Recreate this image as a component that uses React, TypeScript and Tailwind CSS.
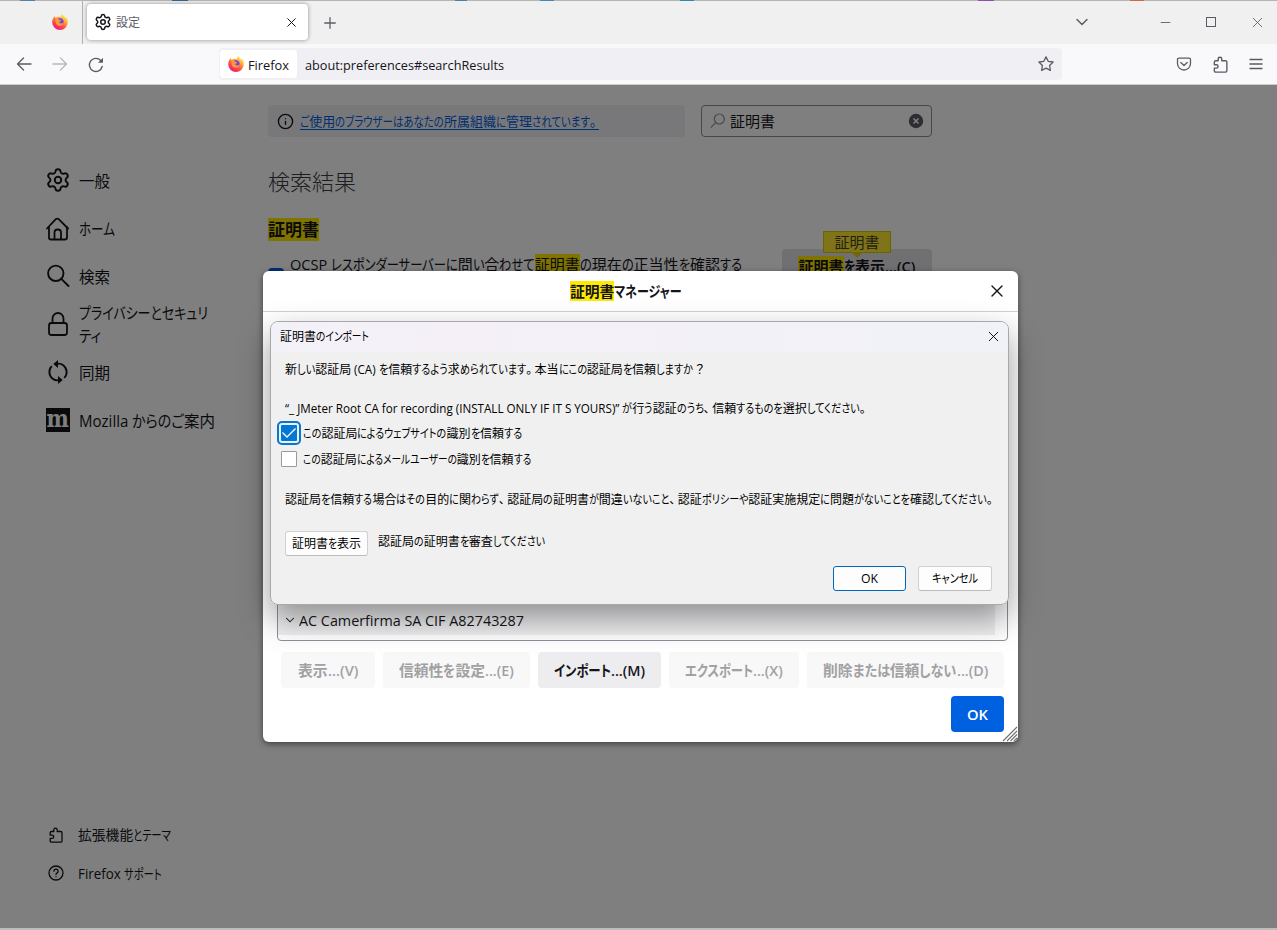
import React, { useLayoutEffect, useRef } from 'react';
import { Settings, X, Plus, ChevronDown, Minus, Menu, Info } from 'lucide-react';

const LATIN_SCALE = 0.97;

// Kanji keep their full advance, latin is slightly condensed and kana runs fill what is left of the width
const Label = ({ text, width, className = '' }: { text: string; width?: number; className?: string }) => {
  const ref = useRef<HTMLSpanElement>(null);

  useLayoutEffect(() => {
    if (!ref.current || !width) return;
    const runs = Array.from(ref.current.querySelectorAll<HTMLElement>('[data-run]'));
    runs.forEach((run) => {
      run.style.transform = '';
      run.style.marginRight = '';
    });
    const widths = runs.map((run) => run.getBoundingClientRect().width);
    const sumOf = (kind: string) => runs.reduce((sum, run, i) => sum + (run.dataset.run === kind ? widths[i] : 0), 0);
    const kana = sumOf('kana');
    const latin = sumOf('latin');
    const fixed = ref.current.getBoundingClientRect().width - kana - latin;
    const latinScale = kana ? LATIN_SCALE : (width - fixed) / latin;
    const kanaScale = (width - fixed - latin * latinScale) / kana;
    runs.forEach((run, i) => {
      const scale = run.dataset.run === 'kana' ? kanaScale : latinScale;
      run.style.transform = `scaleX(${scale})`;
      run.style.marginRight = `${widths[i] * (scale - 1)}px`;
    });
  }, [text, width]);

  return (
    <span ref={ref} className={`inline-block shrink-0 whitespace-pre ${className}`}>
      {text.split(/(\[[^\]]+\]|[、。]|？|[\u3041-\u30ff]+|[\u0020-\u005a\u005c\u005e-\u007e“”]+)/).map((part, i) => {
        if (!part) return null;
        if (part[0] === '[') {
          return <mark key={i} className="bg-[#ffe900] text-inherit">{part.slice(1, -1)}</mark>;
        }
        if (/[、。]/.test(part)) return <span key={i} className="pr-[0.2em]">{part}</span>;
        if (part === '？') return <span key={i} className="pl-[0.2em]">{part}</span>;
        if (/[\u4e00-\u9fff]/.test(part)) return <span key={i}>{part}</span>;
        const kind = /[\u3041-\u30ff]/.test(part) ? 'kana' : 'latin';
        return <span key={i} data-run={kind} className="inline-block origin-left whitespace-pre">{part}</span>;
      })}
    </span>
  );
};

const FirefoxLogo = () => (
  <svg viewBox="0 0 16 16" className="h-4 w-4 shrink-0">
    <defs>
      <linearGradient id="fx-body" x1="0.8" y1="0.05" x2="0.25" y2="1">
        <stop offset="0" stopColor="#fff44f" />
        <stop offset="0.35" stopColor="#ffa436" />
        <stop offset="0.65" stopColor="#ff4a45" />
        <stop offset="1" stopColor="#e31587" />
      </linearGradient>
    </defs>
    <path d="M10.3 0c-1 1.100-1.300 2-1.100 3.100C6.800 2.500 5 3 4 4 3.200 3.600 2.900 3 2.900 2 1.200 3.300.2 5.800.2 8.200a7.800 7.800 0 0 0 15.600 0c0-2.600-1-4.600-2.300-5.600.1.600.1 1-.1 1.500C12.700 2.200 10.900 1.600 10.300 0z" fill="url(#fx-body)" />
    <circle cx="8" cy="7.800" r="3.600" fill="#7542e5" />
    <path d="M3.600 5.200c1.500-.8 3.100-.2 3.900.7 1 .1 1.900.3 1.700.9-.5.800-1.700.8-1.900 1.300.3 1.800 2.500 2 4.200.5-.4 2.200-1.900 3.300-3.800 3.200C4.800 11.600 3 9 3.600 5.200z" fill="#ff9a30" />
  </svg>
);

const PuzzleIcon = ({ className = '' }: { className?: string }) => (
  <svg viewBox="0 0 16 16" fill="none" stroke="currentColor" strokeWidth="1.3" strokeLinejoin="round" className={className}>
    <path d="M2.200 5.800c0-.8.500-1.300 1.300-1.300h2.300V2.900a1.700 1.700 0 0 1 3.400 0v1.600h3.500c.8 0 1.300.5 1.300 1.300v8.100c0 .8-.5 1.300-1.300 1.300H3.500c-.8 0-1.300-.5-1.300-1.300v-2.500h1.900a1.600 1.600 0 0 0 0-3.200H2.200z" />
  </svg>
);

const HomeIcon = () => (
  <svg viewBox="0 0 24 24" fill="none" stroke="currentColor" strokeWidth="1.800" strokeLinejoin="round" strokeLinecap="round" className="mt-px h-6 w-6">
    <path d="M1 11.500 9.800 2.200a2 2 0 0 1 2.900 0L22 11.500M3 10v10.500a2 2 0 0 0 2 2h14a2 2 0 0 0 2-2V10M8.500 22v-6.500a3 3 0 0 1 3-3h.5a3 3 0 0 1 3 3V22" />
  </svg>
);

const SearchIcon = () => (
  <svg viewBox="0 0 24 24" fill="none" stroke="currentColor" strokeWidth="1.900" strokeLinecap="round" className="h-6 w-6">
    <circle cx="9.800" cy="9.300" r="7.700" />
    <path d="m15.300 14.800 7.200 7.200" />
  </svg>
);

const LockIcon = () => (
  <svg viewBox="0 0 24 24" fill="none" stroke="currentColor" strokeWidth="1.800" className="h-6 w-6">
    <rect x="3" y="11" width="18" height="12" rx="2.500" />
    <path d="M6.500 11V6.500a5.500 5.500 0 0 1 11 0V11" />
  </svg>
);

const SyncIcon = () => (
  <svg viewBox="0 0 24 24" fill="none" stroke="currentColor" strokeWidth="1.900" className="h-6 w-6">
    <path d="M6.800 18.800a8.400 8.400 0 0 1-1-12.700M17.200 5.200a8.400 8.400 0 0 1 1 12.700M11 3.700c2.400-.3 4.500.1 6.300 1.600M13 20.300c-2.400.3-4.500-.1-6.300-1.600" />
    <path d="M12 0v8L7.300 4zM12 24v-8l4.700 4z" fill="currentColor" stroke="none" />
  </svg>
);

const MozillaIcon = () => (
  <span className="flex h-6 w-6 shrink-0 items-center justify-center bg-[#15141a] font-['DejaVu_Serif',serif] text-[24px] font-bold leading-6 text-white">
    <span className="-mt-[3px] inline-block scale-x-[0.88]">m</span>
  </span>
);

const navItems = [
  { icon: <Settings size={26} strokeWidth={1.8} className="shrink-0" />, lines: ['一般'], widths: [32] },
  { icon: <HomeIcon />, lines: ['ホーム'], widths: [36] },
  { icon: <SearchIcon />, lines: ['検索'], widths: [32] },
  { icon: <LockIcon />, lines: ['プライバシーとセキュリ', 'ティ'], widths: [129, 22] },
  { icon: <SyncIcon />, lines: ['同期'], widths: [32] },
  { icon: <MozillaIcon />, lines: ['Mozilla からのご案内'], widths: [136] },
];

const managerButtons = [
  { text: '表示...(V)', width: 60, box: 'w-[94px]' },
  { text: '信頼性を設定...(E)', width: 115, box: 'w-[147px]' },
  { text: 'インポート...(M)', width: 91, box: 'w-[123px]', active: true },
  { text: 'エクスポート...(X)', width: 98, box: 'w-[130px]' },
  { text: '削除または信頼しない...(D)', width: 165, box: 'w-[197px]' },
];

const BrowserChrome = () => (
  <header>
    <div className="h-px bg-[linear-gradient(90deg,#b5b5b5_0_20px,#4f82ad_20px_35px,#b5b5b5_35px_172px,#35648c_172px_188px,#b5b5b5_188px_455px,#4780a8_455px_467px,#b5b5b5_467px_540px,#418cae_540px_554px,#b5b5b5_554px_680px,#2c8fa0_680px_694px,#b5b5b5_694px_978px,#8e4cb8_978px_994px,#b5b5b5_994px_1130px,#cf6a3f_1130px_1144px,#b5b5b5_1144px)]" />
    {/* Tab strip */}
    <div className="flex h-[43px] items-center bg-[#f0f0f0] pb-px text-[#5b5b66]">
      <div className="flex h-[43px] w-[83px] items-center border-r border-[#b0b0b4] pl-[52px]">
        <FirefoxLogo />
      </div>
      <div className="ml-1 flex h-[36px] w-[221px] items-center rounded bg-white pl-[7px] pr-[9px] shadow-[0_0_4px_rgba(0,0,0,0.4)]">
        <Settings size={18} strokeWidth={2} className="text-[#15141a]" />
        <Label text="設定" className="ml-[4px] mt-px text-[12px]" />
        <X size={15} strokeWidth={1.6} className="ml-auto text-[#15141a]" />
      </div>
      <Plus size={18} strokeWidth={1.7} className="ml-[13px] mt-px" />
      <div className="ml-auto flex items-center">
        <ChevronDown size={20} strokeWidth={1.7} className="mr-[66px]" />
        <Minus size={15} strokeWidth={1.4} className="mr-[33px]" />
        <span className="mr-[33px] h-[10px] w-[10px] border border-[#5b5b66]" />
        <X size={17} strokeWidth={1.2} className="mr-[11px]" />
      </div>
    </div>
    {/* Navigation bar */}
    <div className="flex h-[41px] items-center border-b border-[#ccccce] bg-[#f9f9fb] text-[#5b5b66]">
      <svg viewBox="0 0 16 16" fill="none" stroke="currentColor" strokeWidth="1.300" strokeLinecap="round" strokeLinejoin="round" className="ml-4 h-4 w-4">
        <path d="M15 8H1.500M7.500 2 1.500 8l6 6" />
      </svg>
      <svg viewBox="0 0 16 16" fill="none" stroke="currentColor" strokeWidth="1.300" strokeLinecap="round" strokeLinejoin="round" className="ml-5 h-4 w-4 opacity-40">
        <path d="M1 8h13.500M8.500 2l6 6-6 6" />
      </svg>
      <svg viewBox="0 0 16 16" fill="none" stroke="currentColor" strokeWidth="1.400" strokeLinecap="round" className="ml-5 mt-px h-4 w-4">
        <path d="M14.200 9.500a6.500 6.500 0 1 1-1.700-6.200l1 1" />
        <path d="M15 .800v5h-5z" fill="currentColor" stroke="none" />
      </svg>
      <div className="ml-[115px] flex h-8 w-[843px] items-center rounded bg-[#f0f0f4] text-[13.500px] text-[#15141a]">
        <div className="ml-px flex h-7 w-[77px] items-center gap-1 rounded-[3px] bg-white pl-2">
          <FirefoxLogo />
          <Label text="Firefox" width={41} className="mt-[2px]" />
        </div>
        <Label text="about:preferences#searchResults" width={199} className="ml-2 mt-[2px]" />
        <svg viewBox="0 0 16 16" fill="none" stroke="#5b5b66" strokeWidth="1.300" strokeLinejoin="round" className="ml-auto mr-2 h-4 w-4">
          <path d="m8 .900 2.200 4.400 4.900.700-3.500 3.500.800 4.900L8 12.200l-4.400 2.200.800-4.900L.900 6l4.900-.700z" />
        </svg>
      </div>
      <svg viewBox="0 0 16 16" fill="none" stroke="currentColor" strokeWidth="1.300" strokeLinecap="round" strokeLinejoin="round" className="ml-auto mr-5 h-4 w-4">
        <path d="M2.800 2.200h10.400c.8 0 1.300.5 1.300 1.300v4a6.500 6.500 0 0 1-13 0v-4c0-.8.500-1.300 1.300-1.300zM4.800 6.500 8 9.500l3.200-3" />
      </svg>
      <PuzzleIcon className="mr-[19px] h-[17px] w-[17px]" />
      <svg viewBox="0 0 16 16" stroke="currentColor" strokeWidth="1.300" className="mr-[13px] h-4 w-4">
        <path d="M1.500 3.500h13M1.500 8h13M1.500 12.500h13" />
      </svg>
    </div>
  </header>
);

const Sidebar = () => (
  <aside className="flex w-[268px] shrink-0 flex-col justify-between pb-[36px] pt-[71px]">
    <nav>
      {navItems.map((item) => (
        <div key={item.lines[0]} className="flex h-12 items-center gap-[9px] pl-[46px] text-[15.500px] leading-[23px]">
          <span className="flex w-6 shrink-0 justify-center">{item.icon}</span>
          <div className="mt-[2px] flex flex-col items-start">
            {item.lines.map((line, i) => (
              <Label key={line} text={line} width={item.widths[i]} />
            ))}
          </div>
        </div>
      ))}
    </nav>
    <div className="pl-[48px] text-[13.800px]">
      <div className="flex h-[38px] items-center gap-[14px]">
        <PuzzleIcon className="h-4 w-4" />
        <Label text="拡張機能とテーマ" width={93} className="mt-px" />
      </div>
      <div className="flex h-[38px] items-center gap-[14px]">
        <svg viewBox="0 0 16 16" fill="none" stroke="currentColor" strokeWidth="1.300" strokeLinecap="round" className="h-4 w-4">
          <circle cx="8" cy="8" r="7" />
          <path d="M5.900 6.200a2.100 2.100 0 1 1 3.300 1.700c-.8.500-1.200.8-1.200 1.500M8 11.600v.1" />
        </svg>
        <Label text="Firefox サポート" width={84} className="mt-[2px]" />
      </div>
    </div>
  </aside>
);

const SearchResults = () => (
  <main className="w-[664px] pt-5">
    <div className="flex gap-4">
      <div className="flex h-8 w-[417px] items-center rounded bg-[#f0f0f4] pl-[9px]">
        <Info size={17} strokeWidth={1.9} />
        <Label text="ご使用のブラウザーはあなたの所属組織に管理されています。" width={299} className="ml-[6px] h-[18px] border-b border-[#0061e0] text-[13px] leading-[18px] text-[#0061e0]" />
      </div>
      <div className="flex h-8 w-[231px] items-center rounded border border-[#8f8f9d] pl-2 pr-[7px]">
        <svg viewBox="0 0 16 16" fill="none" stroke="#8f8f9d" strokeWidth="1.200" strokeLinecap="round" className="h-4 w-4">
          <circle cx="9.300" cy="6" r="5" />
          <path d="m5.700 9.600-4.500 4.500" />
        </svg>
        <Label text="証明書" className="ml-[4px] text-[15px]" />
        <svg viewBox="0 0 16 16" className="ml-auto h-4 w-4">
          <circle cx="8" cy="8" r="7.200" fill="#5b5b66" />
          <path d="m5.500 5.500 5 5m0-5-5 5" stroke="#fff" strokeWidth="1.600" />
        </svg>
      </div>
    </div>
    <h1 className="mt-[26px] text-[22px] font-light leading-9 text-[#3c3c44]">検索結果</h1>
    <h2 className="mt-[20px] flex text-[17px] font-bold leading-[22px]">
      <Label text="[証明書]" />
    </h2>
    <div className="mt-[8px] flex items-start justify-between">
      <div className="flex items-start pt-[4px]">
        <span className="mt-[15px] h-4 w-4 rounded-sm bg-[#0061e0]" />
        <Label text="OCSP レスポンダーサーバーに問い合わせて[証明書]の現在の正当性を確認する" width={452} className="ml-[6px] text-[15px] leading-[22px]" />
      </div>
      <div className="relative flex h-9 w-[150px] justify-center rounded bg-[#e0e0e6] text-[15px] font-semibold leading-[35px]">
        <Label text="[証明書]を表示...(C)" width={117} />
        <div className="absolute -top-[18px] left-[41px] h-[22px] w-[68px] border border-[#d7c600] bg-[#ffe92f] text-center font-normal leading-[20px]">
          <span className="opacity-80">証明書</span>
          <svg viewBox="0 0 12 6" className="absolute left-[27px] top-[20px] h-[6px] w-3">
            <path d="M0 0h12L6 6z" fill="#e5cf10" />
          </svg>
        </div>
      </div>
    </div>
  </main>
);

const CertificateManager = () => (
  <div className="absolute left-[263px] top-[186px] flex h-[471px] w-[755px] flex-col rounded-md bg-white shadow-[0_2px_6px_rgba(0,0,0,0.5)]">
    <div className="relative flex h-[41px] items-center justify-center border-b border-[#cfcfd8] text-[14.800px] font-bold">
      <Label text="[証明書]マネージャー" width={112} className="mr-[29px]" />
      <X size={20} strokeWidth={1.6} className="absolute right-[11px] top-[10px]" />
    </div>
    <div className="ml-[14px] mr-[10px] mt-[14px] flex flex-1 flex-col justify-end rounded border border-[#8f8f9d] pb-[5px]">
      <div className="mr-3 flex h-[31px] items-center bg-[#f0f0f2] pl-[5px] text-[14.500px]">
        <ChevronDown size={14} strokeWidth={1.8} />
        <Label text="AC Camerfirma SA CIF A82743287" width={225} className="ml-[2px] mt-[2px]" />
      </div>
    </div>
    <div className="ml-[18px] mt-[11px] flex gap-2 text-[14.800px] font-semibold">
      {managerButtons.map((button) => (
        <button
          key={button.text}
          className={`flex h-9 items-center justify-center rounded ${button.box} ${button.active ? 'bg-[#ededf0] text-[#15141a]' : 'bg-[#f8f8f8] text-[#a1a1a3]'}`}
        >
          <Label text={button.text} width={button.width} />
        </button>
      ))}
    </div>
    <button className="mb-[10px] ml-auto mr-[14px] mt-2 flex h-9 w-[53px] items-center justify-center rounded bg-[#0061e0] text-[14.500px] font-semibold text-white">
      <Label text="OK" width={21} className="mt-px" />
    </button>
    <svg viewBox="0 0 16 16" className="absolute bottom-0 right-0 h-4 w-4" stroke="#6e6e75" strokeWidth="1.100">
      <path d="M1 15 15 1M5 15 15 5M8.500 15 15 8.500M12 15l3-3" />
    </svg>
  </div>
);

const ImportDialog = () => (
  <div className="absolute left-[270px] top-[236px] h-[284px] w-[739px] overflow-hidden rounded-lg border border-[#a8a8ab] bg-[#f0f0f0] text-[12px] text-black">
    <div className="flex h-[30px] items-center justify-between bg-[linear-gradient(90deg,#f3f1f8,#f5f0f7_25%,#f0f2f8)] pl-[9px] pr-[6px]">
      <Label text="証明書のインポート" width={89} />
      <X size={17} strokeWidth={1.3} className="mb-[2px]" />
    </div>
    <div className="flex flex-col items-start pl-[14px] pt-[9px] leading-[18px]">
      <Label text="新しい認証局 (CA) を信頼するよう求められています。本当にこの認証局を信頼しますか？" width={419} />
      <Label text="“_ JMeter Root CA for recording (INSTALL ONLY IF IT S YOURS)” が行う認証のうち、信頼するものを選択してください。" width={583} className="mt-[21px]" />
      <div className="-ml-[4px] mt-[7px] flex h-[18px] items-center">
        <span className="mt-[-2px] flex h-4 w-4 items-center justify-center rounded-[1px] bg-[#0078d4] outline-2 outline-offset-2 outline-[#0078d4]">
          <svg viewBox="0 0 16 16" fill="none" stroke="#fff" strokeWidth="1.300" className="h-4 w-4">
            <path d="m1.500 7.500 4.500 4.500 8.500-8.500" />
          </svg>
        </span>
        <Label text="この認証局によるウェブサイトの識別を信頼する" width={219} className="ml-[6px]" />
      </div>
      <div className="-ml-[4px] mt-2 flex h-[18px] items-center">
        <span className="mt-[-2px] h-4 w-4 rounded-[1px] border border-[#9a9a9a] bg-white" />
        <Label text="この認証局によるメールユーザーの識別を信頼する" width={228} className="ml-[6px]" />
      </div>
      <Label text="認証局を信頼する場合はその目的に関わらず、認証局の証明書が間違いないこと、認証ポリシーや認証実施規定に問題がないことを確認してください。" width={710} className="mt-[22px]" />
      <div className="mt-[22px] flex items-start">
        <button className="flex h-[25px] w-[83px] items-center justify-center rounded-[3px] border border-[#d0d0d0] border-b-[#bbb] bg-[#fdfdfd]">
          <Label text="証明書を表示" width={69} />
        </button>
        <Label text="認証局の証明書を審査してください" width={167} className="ml-[10px] mt-[2px]" />
      </div>
    </div>
    <div className="mr-4 mt-[10px] flex justify-end gap-3">
      <button className="flex h-[25px] w-[73px] items-center justify-center rounded-[3px] border border-[#0067c0] bg-[#fdfdfd]">
        <Label text="OK" width={17} />
      </button>
      <button className="flex h-[25px] w-[74px] items-center justify-center rounded-[3px] border border-[#d0d0d0] border-b-[#bbb] bg-[#fdfdfd]">
        <Label text="キャンセル" width={46} />
      </button>
    </div>
  </div>
);

const App = () => {
  return (
    <div className="flex h-[930px] w-[1277px] flex-col overflow-hidden bg-white font-['Open_Sans','Noto_Sans_CJK_JP',sans-serif] leading-normal text-[#15141a] [font-feature-settings:'palt']">
      <BrowserChrome />
      <div className="relative flex flex-1 overflow-hidden">
        <Sidebar />
        <SearchResults />
        <div className="absolute inset-0 bg-black/50">
          <CertificateManager />
          <div className="absolute left-[270px] top-[236px] h-[284px] w-[739px] rounded-lg shadow-[0_14px_32px_rgba(0,0,0,0.4)]" />
          <ImportDialog />
        </div>
      </div>
      <div className="h-[2px] bg-[#bcbcbc]" />
    </div>
  );
};

export default App;
